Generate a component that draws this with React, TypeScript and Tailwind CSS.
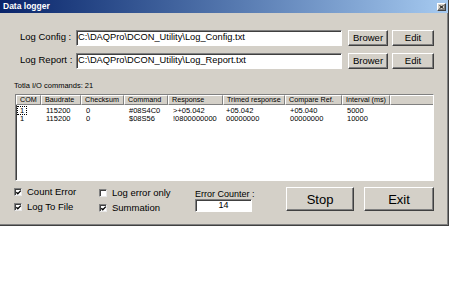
import React from "react";

const font = "font-['Liberation_Sans',Arial,sans-serif]";

function Sunken({ className = "", children }: { className?: string; children?: React.ReactNode }) {
  return (
    <div
      className={`border-t border-l border-t-[#808080] border-l-[#808080] border-b border-r border-b-white border-r-white shadow-[inset_1px_1px_0_#404040] bg-white ${className}`}
    >
      {children}
    </div>
  );
}

function Btn({ className = "", children }: { className?: string; children?: React.ReactNode }) {
  return (
    <div
      className={`flex items-center justify-center bg-[#d4d0c8] border-t border-l border-t-white border-l-white border-b border-r border-b-[#404040] border-r-[#404040] shadow-[inset_-1px_-1px_0_#808080] text-black ${className}`}
    >
      {children}
    </div>
  );
}

function Check({ checked }: { checked: boolean }) {
  return (
    <div className="w-[8px] h-[8px] shrink-0 bg-white border-t border-l border-t-[#808080] border-l-[#808080] border-b border-r border-b-[#e8e8e8] border-r-[#e8e8e8] shadow-[inset_1px_1px_0_#404040] relative">
      {checked && (
        <svg className="absolute left-0 top-0" width="7" height="7" viewBox="0 0 7 7">
          <path d="M1.3 3.2 L2.8 4.8 L5.8 1.6" fill="none" stroke="#000" strokeWidth="1.3" />
        </svg>
      )}
    </div>
  );
}

const cols = [
  { name: "COM", w: 25 },
  { name: "Baudrate", w: 40 },
  { name: "Checksum", w: 43 },
  { name: "Command", w: 44 },
  { name: "Response", w: 55 },
  { name: "Trimed response", w: 62 },
  { name: "Compare Ref.", w: 57 },
  { name: "Interval (ms)", w: 48 },
];

const rows = [
  ["1", "115200", "0", "#08S4C0", ">+05.042", "+05.042", "+05.040", "5000"],
  ["1", "115200", "0", "$08S56", "!0800000000", "00000000", "00000000", "10000"],
];

export default function App() {
  return (
    <div className={`w-[450px] h-[285px] bg-white ${font} text-black`}>
      <div className="w-[449px] h-[226px] bg-[#d4d0c8] border-r border-b border-r-[#404040] border-b-[#404040] shadow-[inset_-1px_-1px_0_#808080] flex flex-col">
        {/* Title bar */}
        <div className="h-[13px] shrink-0 bg-gradient-to-r from-[#0a246a] to-[#a6caf0] flex items-center justify-between pl-[3px] pr-[2px]">
          <span className="text-white font-bold text-[8.5px] leading-none">Data logger</span>
          <Btn className="w-[9px] h-[8px] mt-[1px]">
            <svg width="5" height="4" viewBox="0 0 5 4">
              <path d="M0.5 0.3 L4.5 3.7 M4.5 0.3 L0.5 3.7" stroke="#000" strokeWidth="1" />
            </svg>
          </Btn>
        </div>

        {/* Log Config row */}
        <div className="flex items-center mt-[17px] pl-[20px] h-[16px]">
          <div className="w-[56px] text-[9.5px] leading-none -mt-[2px]">Log Config :</div>
          <Sunken className="w-[266px] h-[16px] flex items-center pl-[1px] text-[9.3px] leading-none">
            C:\DAQPro\DCON_Utility\Log_Config.txt
          </Sunken>
          <Btn className="w-[40px] h-[16px] ml-[6px] text-[9.5px] leading-none">Brower</Btn>
          <Btn className="w-[42px] h-[16px] ml-[4px] text-[9.5px] leading-none">Edit</Btn>
        </div>

        {/* Log Report row */}
        <div className="flex items-center mt-[7px] pl-[20px] h-[16px]">
          <div className="w-[56px] text-[9.5px] leading-none -mt-[2px]">Log Report :</div>
          <Sunken className="w-[266px] h-[16px] flex items-center pl-[1px] text-[9.3px] leading-none">
            C:\DAQPro\DCON_Utility\Log_Report.txt
          </Sunken>
          <Btn className="w-[40px] h-[16px] ml-[6px] text-[9.5px] leading-none">Brower</Btn>
          <Btn className="w-[42px] h-[16px] ml-[4px] text-[9.5px] leading-none">Edit</Btn>
        </div>

        {/* Total */}
        <div className="mt-[12px] pl-[14px] h-[9px] text-[7.5px] leading-[9px]">Totla I/O commands: 21</div>

        {/* List view */}
        <Sunken className="mt-[4px] ml-[15px] w-[419px] h-[87px] flex flex-col overflow-hidden">
          <div className="flex h-[10px] shrink-0 bg-[#d4d0c8]">
            {cols.map((c) => (
              <div
                key={c.name}
                style={{ width: c.w }}
                className="shrink-0 h-[10px] border-t border-l border-t-white border-l-white border-r border-b border-r-[#808080] border-b-[#808080] text-[7.2px] leading-[8px] pl-[3px] whitespace-nowrap overflow-hidden"
              >
                {c.name}
              </div>
            ))}
            <div className="flex-1 h-[10px] border-t border-l border-t-white border-l-white border-b border-b-[#808080]" />
          </div>
          <div className="h-[1px]" />
          {rows.map((r, ri) => (
            <div key={ri} className="flex h-[8.5px] items-center">
              {r.map((v, i) => (
                <div
                  key={i}
                  style={{ width: cols[i].w }}
                  className={`shrink-0 text-[7.5px] leading-none whitespace-nowrap ${i === 0 ? "pl-[1px]" : i === 5 ? "pl-[3px]" : "pl-[5px]"}`}
                >
                  {i === 0 && ri === 0 ? (
                    <span className="inline-block border border-dotted border-black px-[2px] leading-[7px]">{v}</span>
                  ) : i === 0 ? (
                    <span className="pl-[3px]">{v}</span>
                  ) : (
                    v
                  )}
                </div>
              ))}
            </div>
          ))}
        </Sunken>

        {/* Bottom row */}
        <div className="flex mt-[5px] pl-[14px]">
          <div className="w-[85px] flex flex-col gap-[7px] mt-[2px]">
            <div className="flex items-center h-[8px] gap-[5px]">
              <Check checked />
              <span className="text-[9.5px] leading-none">Count Error</span>
            </div>
            <div className="flex items-center h-[8px] gap-[5px]">
              <Check checked />
              <span className="text-[9.5px] leading-none">Log To File</span>
            </div>
          </div>
          <div className="w-[96px] flex flex-col gap-[7px] mt-[3px]">
            <div className="flex items-center h-[8px] gap-[5px]">
              <Check checked={false} />
              <span className="text-[9.5px] leading-none">Log error only</span>
            </div>
            <div className="flex items-center h-[8px] gap-[5px]">
              <Check checked />
              <span className="text-[9.5px] leading-none">Summation</span>
            </div>
          </div>
          <div className="w-[91px] flex flex-col mt-[3px]">
            <div className="text-[9px] leading-[10px] h-[10px]">Error Counter :</div>
            <Sunken className="w-[57px] h-[13px] flex items-center justify-center text-[9px] leading-none">14</Sunken>
          </div>
          <Btn className="w-[68px] h-[24px] mt-[1px] text-[13px] leading-none">Stop</Btn>
          <Btn className="w-[70px] h-[24px] mt-[1px] ml-[10px] text-[13px] leading-none">Exit</Btn>
        </div>
      </div>
    </div>
  );
}
